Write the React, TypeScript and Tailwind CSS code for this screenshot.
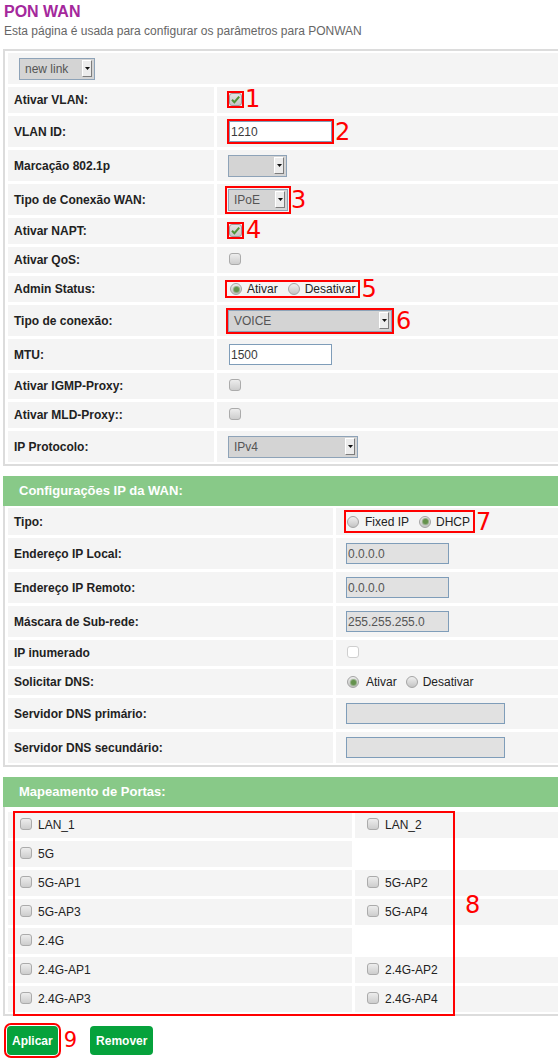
import type { ReactNode } from 'react';

/**
 * PON WAN — router config page, with red numbered annotations.
 */

const PORTS: [string, string | null][] = [
  ['LAN_1', 'LAN_2'],
  ['5G', null],
  ['5G-AP1', '5G-AP2'],
  ['5G-AP3', '5G-AP4'],
  ['2.4G', null],
  ['2.4G-AP1', '2.4G-AP2'],
  ['2.4G-AP3', '2.4G-AP4'],
];

function Check({
  checked = false,
  disabled = false,
  className = '',
}: {
  checked?: boolean;
  disabled?: boolean;
  className?: string;
}) {
  const face = disabled
    ? 'border-[#cfcfcf] bg-white'
    : checked
      ? 'border-[#9a9a9a] bg-linear-to-b from-[#e4e4e4] to-[#c6c6c6]'
      : 'border-[#ababab] bg-linear-to-b from-[#ededed] to-[#cdcdcd]';
  return (
    <span
      className={`flex shrink-0 items-center justify-center rounded-[3px] border ${face} ${className}`}
    >
      {checked && (
        <svg width="11" height="11" viewBox="0 0 11 11">
          <path d="M2 5.8 L4.4 8.2 L9.2 2.6" fill="none" stroke="#4f9336" strokeWidth="2" />
        </svg>
      )}
    </span>
  );
}

function Radio({ checked = false, className = '' }: { checked?: boolean; className?: string }) {
  return (
    <span
      className={`flex h-[12px] w-[12px] shrink-0 items-center justify-center rounded-full border border-[#a4a4a4] bg-linear-to-b from-[#efefef] to-[#c4c4c4] ${className}`}
    >
      {checked && <span className="h-[5px] w-[5px] rounded-full bg-[#64924d] shadow-[0_0_1px_1px_#8aa87c]" />}
    </span>
  );
}

function Select({ value = '', className }: { value?: string; className: string }) {
  return (
    <span
      className={`flex h-[22px] shrink-0 items-center justify-between border border-[#8ea3b8] bg-[#d4d4d4] pl-[5px] pr-[2px] text-[12px] text-[#555] ${className}`}
    >
      <span>{value}</span>
      <span className="flex h-[17px] w-[10px] items-center justify-center border border-t-white border-l-white border-r-[#7d7d7d] border-b-[#7d7d7d] bg-[#ececec]">
        <svg width="5" height="3" viewBox="0 0 5 3">
          <path d="M0 0H5L2.5 3Z" fill="#111" />
        </svg>
      </span>
    </span>
  );
}

function TextBox({
  value = '',
  disabled = false,
  className,
}: {
  value?: string;
  disabled?: boolean;
  className: string;
}) {
  return (
    <span
      className={`flex h-[21px] shrink-0 items-center border border-[#7f9db9] pl-[1px] text-[12px] ${
        disabled ? 'bg-[#e1e1e1] text-[#555]' : 'bg-white text-[#3a3a3a]'
      } ${className}`}
    >
      {value}
    </span>
  );
}

function Mark({ n, className = 'ml-[3px]' }: { n: string; className?: string }) {
  return (
    <span className={`font-['DejaVu_Sans',sans-serif] text-[24px] leading-none text-[#ff0000] ${className}`}>
      {n}
    </span>
  );
}

function Row({
  label,
  h,
  pad,
  children,
}: {
  label: string;
  h: string;
  pad: string;
  children?: ReactNode;
}) {
  return (
    <>
      <div className={`flex items-center bg-[#f4f4f4] pl-[6px] text-[12px] font-bold ${h}`}>{label}</div>
      <div className={`flex items-center bg-[#f4f4f4] ${pad}`}>{children}</div>
    </>
  );
}

function Header({ children }: { children: ReactNode }) {
  return (
    <div className="ml-[3px] flex h-[30px] w-[620px] items-center bg-[#88c988] pl-[16px] text-[13px] font-bold text-white">
      {children}
    </div>
  );
}

export default function App() {
  const p1 = 'pl-[11px]';
  const p2 = 'pl-[10px]';

  return (
    <div className="h-[1062px] w-full overflow-hidden bg-white font-['Liberation_Sans',Arial,sans-serif] text-[#222]">
      <div className="w-[640px] pt-[3px]">
        <h1 className="ml-[4px] text-[16px] leading-[18px] font-bold text-[#a4289c]">PON WAN</h1>
        <p className="ml-[4px] mt-[3px] text-[12px] leading-[15px] text-[#666]">
          Esta página é usada para configurar os parâmetros para PONWAN
        </p>

        {/* link settings */}
        <div className="ml-[3px] mt-[10px] w-[620px] border-2 border-[#dcdcdc] px-[3px] py-[2px]">
          <div className="grid grid-cols-[206px_1fr] gap-[3px]">
            <div className="col-span-2 flex h-[31px] items-center bg-[#f4f4f4] pl-[11px]">
              <Select value="new link" className="w-[76px]" />
            </div>

            <Row label="Ativar VLAN:" h="h-[26px]" pad={p1}>
              <span className="ml-[1px] mb-[2px] flex outline-2 outline-[#ff0000]">
                <Check checked className="h-[13px] w-[13px]" />
              </span>
              <Mark n="1" className="ml-[3px] mb-[2px]" />
            </Row>
            <Row label="VLAN ID:" h="h-[31px]" pad={p1}>
              <span className="ml-[1px] flex outline-2 outline-[#ff0000]">
                <TextBox value="1210" className="w-[103px]" />
              </span>
              <Mark n="2" />
            </Row>
            <Row label="Marcação 802.1p" h="h-[31px]" pad={p1}>
              <Select className="w-[59px]" />
            </Row>
            <Row label="Tipo de Conexão WAN:" h="h-[31px]" pad={p1}>
              <span className="flex outline-2 outline-offset-1 outline-[#ff0000]">
                <Select value="IPoE" className="w-[60px]" />
              </span>
              <Mark n="3" />
            </Row>
            <Row label="Ativar NAPT:" h="h-[26px]" pad={p1}>
              <span className="ml-[1px] mb-[2px] flex outline-2 outline-[#ff0000]">
                <Check checked className="h-[13px] w-[13px]" />
              </span>
              <Mark n="4" className="ml-[4px] mb-[2px]" />
            </Row>
            <Row label="Ativar QoS:" h="h-[26px]" pad={p1}>
              <Check className="ml-[1px] mb-[2px] h-[12px] w-[12px]" />
            </Row>
            <Row label="Admin Status:" h="h-[26px]" pad={p1}>
              <span className="-ml-[1px] flex h-[14px] items-center pl-[3px] pr-[3px] text-[12px] outline-2 outline-[#ff0000]">
                <Radio checked />
                <span className="ml-[5px]">Ativar</span>
                <Radio className="ml-[10px]" />
                <span className="ml-[5px]">Desativar</span>
              </span>
              <Mark n="5" />
            </Row>
            <Row label="Tipo de conexão:" h="h-[31px]" pad={p1}>
              <span className="flex outline-2 outline-[#ff0000]">
                <Select value="VOICE" className="w-[164px]" />
              </span>
              <Mark n="6" className="ml-[4px]" />
            </Row>
            <Row label="MTU:" h="h-[31px]" pad={p1}>
              <TextBox value="1500" className="ml-[1px] w-[103px]" />
            </Row>
            <Row label="Ativar IGMP-Proxy:" h="h-[26px]" pad={p1}>
              <Check className="ml-[1px] mb-[2px] h-[12px] w-[12px]" />
            </Row>
            <Row label="Ativar MLD-Proxy::" h="h-[26px]" pad={p1}>
              <Check className="ml-[1px] mb-[2px] h-[12px] w-[12px]" />
            </Row>
            <Row label="IP Protocolo:" h="h-[31px]" pad={p1}>
              <Select value="IPv4" className="w-[130px]" />
            </Row>
          </div>
        </div>

        {/* WAN IP */}
        <div className="mt-[10px]">
          <Header>Configurações IP da WAN:</Header>
          <div className="ml-[3px] w-[620px] border-x-2 border-b-2 border-[#dcdcdc] px-[3px] py-[2px]">
            <div className="grid grid-cols-[325px_1fr] gap-[3px]">
              <Row label="Tipo:" h="h-[27px]" pad={p2}>
                <span className="flex h-[19px] items-center pl-[1px] pr-[3px] text-[12px] outline-2 outline-[#ff0000]">
                  <Radio />
                  <span className="ml-[6px]">Fixed IP</span>
                  <Radio checked className="ml-[10px]" />
                  <span className="ml-[5px]">DHCP</span>
                </span>
                <Mark n="7" />
              </Row>
              <Row label="Endereço IP Local:" h="h-[31px]" pad={p2}>
                <TextBox disabled value="0.0.0.0" className="w-[103px]" />
              </Row>
              <Row label="Endereço IP Remoto:" h="h-[31px]" pad={p2}>
                <TextBox disabled value="0.0.0.0" className="w-[103px]" />
              </Row>
              <Row label="Máscara de Sub-rede:" h="h-[31px]" pad={p2}>
                <TextBox disabled value="255.255.255.0" className="w-[103px]" />
              </Row>
              <Row label="IP inumerado" h="h-[26px]" pad={p2}>
                <Check disabled className="ml-[1px] mb-[2px] h-[12px] w-[12px]" />
              </Row>
              <Row label="Solicitar DNS:" h="h-[26px]" pad={p2}>
                <span className="flex items-center pl-[1px] text-[12px]">
                  <Radio checked />
                  <span className="ml-[7px]">Ativar</span>
                  <Radio className="ml-[9px]" />
                  <span className="ml-[5px]">Desativar</span>
                </span>
              </Row>
              <Row label="Servidor DNS primário:" h="h-[31px]" pad={p2}>
                <TextBox disabled className="w-[159px]" />
              </Row>
              <Row label="Servidor DNS secundário:" h="h-[31px]" pad={p2}>
                <TextBox disabled className="w-[159px]" />
              </Row>
            </div>
          </div>
        </div>

        {/* port mapping */}
        <div className="mt-[10px]">
          <Header>Mapeamento de Portas:</Header>
          <div className="relative ml-[3px] w-[620px] border-x-2 border-b-2 border-[#dcdcdc] px-[3px] pt-[5px] pb-[2px]">
            <div className="grid grid-cols-[344px_1fr] gap-[3px]">
              {PORTS.map(([a, b]) => (
                <div key={a} className="contents">
                  <div className="flex h-[26px] items-center bg-[#f4f4f4] pl-[12px] text-[12px]">
                    <Check className="mb-[2px] h-[12px] w-[12px]" />
                    <span className="ml-[6px]">{a}</span>
                  </div>
                  {b ? (
                    <div className="flex items-center bg-[#f4f4f4] pl-[12px] text-[12px]">
                      <Check className="mb-[2px] h-[12px] w-[12px]" />
                      <span className="ml-[6px]">{b}</span>
                    </div>
                  ) : (
                    <div />
                  )}
                </div>
              ))}
            </div>
            <div className="pointer-events-none absolute left-[8px] top-[4px] h-[205px] w-[442px] border-2 border-[#ff0000]" />
            <Mark n="8" className="absolute left-[460px] top-[86px]" />
          </div>
        </div>

        <div className="mt-[10px] flex items-center pl-[7px]">
          <button
            type="button"
            className="h-[29px] rounded-[4px] bg-[#06a23c] px-[5px] text-[12px] font-bold text-white outline-2 outline-offset-1 outline-[#ff0000]"
          >
            Aplicar
          </button>
          <span className="ml-[6px] font-['DejaVu_Sans',sans-serif] text-[21px] leading-none text-[#ff0000]">9</span>
          <button
            type="button"
            className="ml-[13px] h-[29px] rounded-[4px] bg-[#06a23c] px-[6px] text-[12px] font-bold text-white"
          >
            Remover
          </button>
        </div>
      </div>
    </div>
  );
}
